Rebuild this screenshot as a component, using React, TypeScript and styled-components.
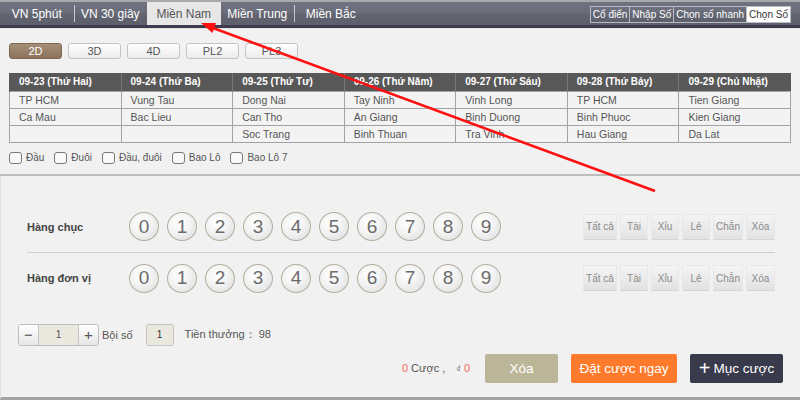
import React from "react";
import styled, { createGlobalStyle } from "styled-components";

const Global = createGlobalStyle`
  html, body { margin: 0; padding: 0; background: #f1f1f1; }
  body { font-family: "Liberation Sans", Arial, sans-serif; }
  * { box-sizing: border-box; }
`;

const Page = styled.div`
  position: relative;
  width: 800px;
  height: 400px;
  overflow: hidden;
  background: #f1f1f1;
  display: flex;
  flex-direction: column;
  font-family: "Liberation Sans", Arial, sans-serif;
`;

const TopBar = styled.div`
  height: 28px;
  flex: none;
  display: flex;
  align-items: stretch;
  background: linear-gradient(#70737f 0%, #6a6d7a 45%, #61646f 55%, #5d606c 100%);
  border-top: 2px solid #a9a9ad;
  border-bottom: 3px solid #3b3c50;
  box-shadow: 0 1px 0 #e4e2d8;
`;

const Tab = styled.div<{ $active?: boolean; $sep?: boolean }>`
  width: 73.5px;
  display: flex;
  align-items: center;
  justify-content: center;
  font-size: 12px;
  color: ${(p) => (p.$active ? "#555" : "#fff")};
  background: ${(p) => (p.$active ? "#e7e7e7" : "transparent")};
  position: relative;
  &::before {
    content: "";
    display: ${(p) => (p.$sep ? "block" : "none")};
    position: absolute;
    left: 0;
    top: 3px;
    bottom: 3px;
    width: 1px;
    background: #c9cad2;
  }
`;

const ModeGroup = styled.div`
  margin-left: auto;
  margin-right: 9px;
  display: flex;
  align-self: center;
  height: 17px;
  margin-top: 1px;
`;

const ModeBtn = styled.div<{ $active?: boolean }>`
  height: 17px;
  padding: 0 2px;
  display: flex;
  align-items: center;
  font-size: 10px;
  color: ${(p) => (p.$active ? "#333" : "#fff")};
  background: ${(p) => (p.$active ? "#fff" : "transparent")};
  border: 1px solid #b9bac2;
  margin-left: -1px;
  white-space: nowrap;
`;

const Upper = styled.div`
  padding: 15px 9px 10px;
  border-bottom: 2px solid #bdbdbd;
`;

const TypeRow = styled.div`
  display: flex;
  gap: 6px;
  height: 16px;
  margin-bottom: 14px;
`;

const TypeBtn = styled.div<{ $active?: boolean }>`
  width: 53px;
  height: 16px;
  display: flex;
  align-items: center;
  justify-content: center;
  font-size: 11px;
  border-radius: 3px;
  color: ${(p) => (p.$active ? "#fff" : "#555")};
  background: ${(p) =>
    p.$active
      ? "linear-gradient(#a78e76, #8a725c)"
      : "linear-gradient(#ffffff, #ebebeb)"};
  border: 1px solid ${(p) => (p.$active ? "#7d6852" : "#c4c4c4")};
`;

const Table = styled.table`
  width: 782px;
  border-collapse: collapse;
  table-layout: fixed;
`;

const Th = styled.th`
  height: 18px;
  background: #585858;
  color: #fff;
  font-size: 10px;
  font-weight: bold;
  text-align: left;
  padding: 0 0 0 9px;
  border-left: 1px solid #777;
  &:first-child { border-left: 1px solid #585858; }
`;

const Td = styled.td`
  height: 17px;
  font-size: 10.5px;
  color: #555;
  padding: 0 0 0 9px;
  border: 1px solid #a3a3a3;
  background: #f3f3f3;
`;

const CheckRow = styled.div`
  display: flex;
  align-items: center;
  gap: 10px;
  margin-top: 9px;
  height: 12px;
`;

const CheckItem = styled.label`
  display: flex;
  align-items: center;
  gap: 4px;
  font-size: 10px;
  color: #555;
`;

const Box = styled.span`
  width: 13px;
  height: 12px;
  border: 1px solid #7a7a7a;
  border-radius: 3px;
  background: #f8f8f8;
`;

const Lower = styled.div`
  flex: 1;
  display: flex;
  flex-direction: column;
  padding-top: 26px;
  border-left: 1px solid #e2e2e2;
  border-bottom: 3px solid #a3a3a3;
`;

const NumRow = styled.div<{ $line?: boolean }>`
  margin: 0 25px 0 26px;
  height: 51px;
  display: flex;
  align-items: center;
  border-bottom: ${(p) => (p.$line ? "1px solid #cfcfcf" : "none")};
`;

const RowLabel = styled.div`
  width: 102px;
  font-size: 11px;
  font-weight: bold;
  color: #444;
`;

const Balls = styled.div`
  display: flex;
  gap: 8px;
`;

const Ball = styled.div`
  width: 30px;
  height: 29px;
  border-radius: 50%;
  border: 1px solid #b3ae9f;
  background: radial-gradient(circle at 40% 35%, #ffffff 0%, #f3f3f3 45%, #d9d9d9 100%);
  display: flex;
  align-items: center;
  justify-content: center;
  font-size: 19px;
  color: #6b6b6b;
`;

const QuickGroup = styled.div`
  margin-left: auto;
  display: flex;
  gap: 3px;
`;

const QuickBtn = styled.div<{ $w: number }>`
  width: ${(p) => p.$w}px;
  height: 26px;
  display: flex;
  align-items: center;
  justify-content: center;
  font-size: 10px;
  color: #8a8a8a;
  background: linear-gradient(#f4f4f4, #e2e2e2);
  border: 1px solid #e8e8e8;
  border-bottom-color: #d4d4d4;
`;

const BetRow = styled.div`
  margin: 20px 0 0 17px;
  height: 22px;
  display: flex;
  align-items: center;
  font-size: 11px;
  color: #555;
`;

const Stepper = styled.div`
  display: flex;
  height: 22px;
  border: 1px solid #bdbdbd;
  border-radius: 3px;
  overflow: hidden;
`;

const StepBtn = styled.div`
  width: 19px;
  display: flex;
  align-items: center;
  justify-content: center;
  font-size: 15px;
  color: #555;
  background: linear-gradient(#ffffff, #e6e6e6);
`;

const StepInput = styled.div`
  width: 41px;
  display: flex;
  align-items: center;
  justify-content: center;
  font-size: 10px;
  color: #555;
  background: #ebe8df;
  border-left: 1px solid #c5c5c5;
  border-right: 1px solid #c5c5c5;
`;

const MultLabel = styled.span`
  margin-left: 3px;
  font-size: 11px;
  color: #555;
`;

const MultBox = styled.div`
  margin-left: 13px;
  width: 28px;
  height: 22px;
  border: 1px solid #c4c4c4;
  border-radius: 2px;
  background: #ebe8df;
  display: flex;
  align-items: center;
  justify-content: center;
  font-size: 10px;
  color: #333;
`;

const Prize = styled.span`
  margin-left: 11px;
  font-size: 11px;
  color: #555;
`;

const ActionRow = styled.div`
  margin: 8px 17px 0 0;
  display: flex;
  align-items: center;
  justify-content: flex-end;
  gap: 13px;
`;

const Summary = styled.div`
  font-size: 11px;
  color: #555;
  margin-right: 2px;
  display: flex;
  align-items: baseline;
  gap: 3px;
`;

const Red = styled.span`
  color: #f46a5a;
`;

const Dong = styled.span`
  font-size: 9px;
  color: #777;
  margin-left: 8px;
`;

const ActionBtn = styled.div<{ $bg: string; $w: number }>`
  width: ${(p) => p.$w}px;
  height: 29px;
  border-radius: 2px;
  background: ${(p) => p.$bg};
  color: #fff;
  font-size: 13.5px;
  display: flex;
  align-items: center;
  justify-content: center;
  gap: 3px;
`;

const Plus = styled.span`
  font-size: 20px;
  line-height: 20px;
`;

const ArrowLayer = styled.svg`
  position: absolute;
  left: 0;
  top: 0;
  pointer-events: none;
`;

const tabs = [
  { t: "VN 5phút" },
  { t: "VN 30 giây", sep: true },
  { t: "Miền Nam", active: true },
  { t: "Miền Trung" },
  { t: "Miền Bắc", sep: true },
];

const headers = [
  "09-23 (Thứ Hai)",
  "09-24 (Thứ Ba)",
  "09-25 (Thứ Tư)",
  "09-26 (Thứ Năm)",
  "09-27 (Thứ Sáu)",
  "09-28 (Thứ Bảy)",
  "09-29 (Chủ Nhật)",
];

const rows = [
  ["TP HCM", "Vung Tau", "Dong Nai", "Tay Ninh", "Vinh Long", "TP HCM", "Tien Giang"],
  ["Ca Mau", "Bac Lieu", "Can Tho", "An Giang", "Binh Duong", "Binh Phuoc", "Kien Giang"],
  ["", "", "Soc Trang", "Binh Thuan", "Tra Vinh", "Hau Giang", "Da Lat"],
];

const quick: [string, number][] = [
  ["Tất cả", 34],
  ["Tài", 28],
  ["Xỉu", 28],
  ["Lẻ", 28],
  ["Chẵn", 30],
  ["Xóa", 29],
];

const digits = [0, 1, 2, 3, 4, 5, 6, 7, 8, 9];

function NumberRow({ label, line }: { label: string; line?: boolean }) {
  return (
    <NumRow $line={line}>
      <RowLabel>{label}</RowLabel>
      <Balls>
        {digits.map((d) => (
          <Ball key={d}>{d}</Ball>
        ))}
      </Balls>
      <QuickGroup>
        {quick.map(([q, w]) => (
          <QuickBtn key={q} $w={w}>
            {q}
          </QuickBtn>
        ))}
      </QuickGroup>
    </NumRow>
  );
}

export default function App() {
  return (
    <Page>
      <Global />
      <TopBar>
        {tabs.map((t) => (
          <Tab key={t.t} $active={t.active} $sep={t.sep}>
            {t.t}
          </Tab>
        ))}
        <ModeGroup>
          <ModeBtn>Cổ điển</ModeBtn>
          <ModeBtn>Nhập Số</ModeBtn>
          <ModeBtn>Chọn số nhanh</ModeBtn>
          <ModeBtn $active>Chọn Số</ModeBtn>
        </ModeGroup>
      </TopBar>

      <Upper>
        <TypeRow>
          <TypeBtn $active>2D</TypeBtn>
          <TypeBtn>3D</TypeBtn>
          <TypeBtn>4D</TypeBtn>
          <TypeBtn>PL2</TypeBtn>
          <TypeBtn>PL3</TypeBtn>
        </TypeRow>
        <Table>
          <thead>
            <tr>
              {headers.map((h) => (
                <Th key={h}>{h}</Th>
              ))}
            </tr>
          </thead>
          <tbody>
            {rows.map((r, i) => (
              <tr key={i}>
                {r.map((c, j) => (
                  <Td key={j}>{c}</Td>
                ))}
              </tr>
            ))}
          </tbody>
        </Table>
        <CheckRow>
          {["Đầu", "Đuôi", "Đầu, đuôi", "Bao Lô", "Bao Lô 7"].map((c) => (
            <CheckItem key={c}>
              <Box />
              {c}
            </CheckItem>
          ))}
        </CheckRow>
      </Upper>

      <Lower>
        <NumberRow label="Hàng chục" line />
        <NumberRow label="Hàng đơn vị" />
        <BetRow>
          <Stepper>
            <StepBtn>−</StepBtn>
            <StepInput>1</StepInput>
            <StepBtn>+</StepBtn>
          </Stepper>
          <MultLabel>Bội số</MultLabel>
          <MultBox>1</MultBox>
          <Prize>Tiền thưởng：&nbsp;98</Prize>
        </BetRow>
        <ActionRow>
          <Summary>
            <Red>0</Red>
            <span>Cược ,</span>
            <Dong>₫</Dong>
            <Red>0</Red>
          </Summary>
          <ActionBtn $bg="#bcb699" $w={73}>
            Xóa
          </ActionBtn>
          <ActionBtn $bg="#ff7a2b" $w={106}>
            Đặt cược ngay
          </ActionBtn>
          <ActionBtn $bg="#393a4c" $w={93}>
            <Plus>+</Plus>Mục cược
          </ActionBtn>
        </ActionRow>
      </Lower>

      <ArrowLayer width="800" height="400" viewBox="0 0 800 400">
        <line x1="655" y1="191" x2="213" y2="28" stroke="#ff1010" strokeWidth="2.6" />
        <polygon points="201,23 216,23 212.5,33" fill="#ff1010" />
      </ArrowLayer>
    </Page>
  );
}
